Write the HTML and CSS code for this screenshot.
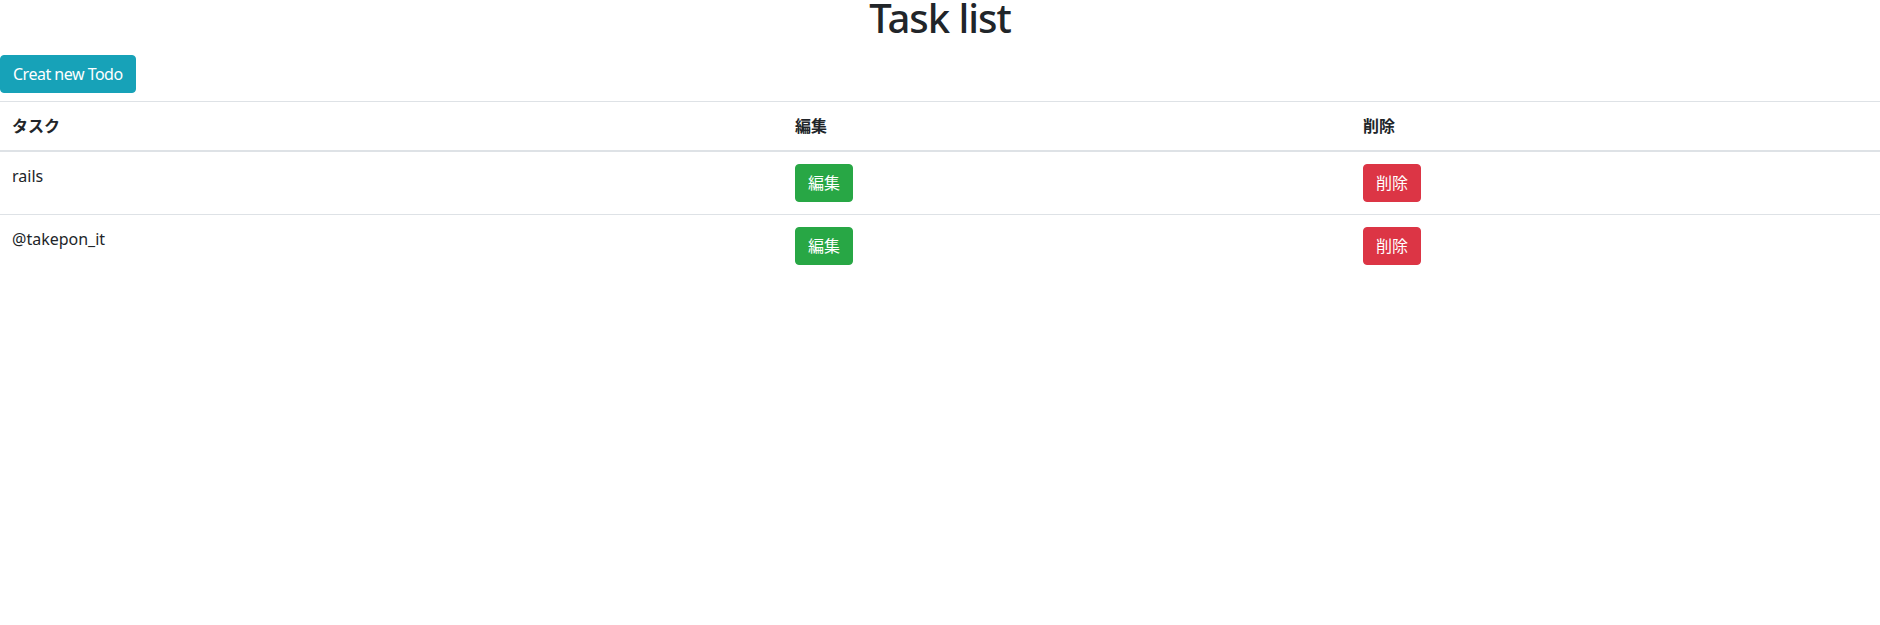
FILE: index.html
```html
<!DOCTYPE html>
<html lang="ja">
<head>
<meta charset="utf-8">
<title>Task list</title>
<link rel="stylesheet" href="styles.css">
</head>
<body>
<h1 class="title">Task list</h1>
<a class="btn btn-info btn-new" href="#">Creat new Todo</a>
<table class="table">
  <colgroup>
    <col class="col-task">
    <col class="col-edit">
    <col class="col-del">
  </colgroup>
  <thead>
    <tr><th>タスク</th><th>編集</th><th>削除</th></tr>
  </thead>
  <tbody>
    <tr>
      <td>rails</td>
      <td><a class="btn btn-success" href="#">編集</a></td>
      <td><a class="btn btn-danger" href="#">削除</a></td>
    </tr>
    <tr>
      <td>@takepon_it</td>
      <td><a class="btn btn-success" href="#">編集</a></td>
      <td><a class="btn btn-danger" href="#">削除</a></td>
    </tr>
  </tbody>
</table>
</body>
</html>
```
FILE: styles.css
```css
* { box-sizing: border-box; }
body {
  margin: 0;
  font-family: "Noto Sans", "Noto Sans CJK JP", sans-serif;
  font-size: 16px;
  line-height: 1.5;
  color: #212529;
  background: #fff;
}
.title {
  margin: 0 0 19px;
  font-size: 40px;
  font-weight: 500;
  line-height: 36px;
  letter-spacing: -1px;
  text-align: center;
}
.btn {
  display: inline-block;
  padding: 6px 12px;
  font-size: 16px;
  line-height: 24px;
  border-radius: 4px;
  color: #fff;
  text-decoration: none;
  border: 1px solid transparent;
  vertical-align: middle;
}
.btn-new { letter-spacing: -0.5px; }
.btn-info { background: #17a2b8; border-color: #17a2b8; }
.btn-success { background: #28a745; border-color: #28a745; }
.btn-danger { background: #dc3545; border-color: #dc3545; }
.table {
  width: 100%;
  margin-top: 8px;
  border-collapse: collapse;
  table-layout: fixed;
}
.col-task { width: 783px; }
.col-edit { width: 568px; }
.col-del { width: 529px; }
.table th, .table td {
  padding: 12px;
  text-align: left;
  vertical-align: top;
  border-top: 1px solid #dee2e6;
}
.table th { font-weight: 700; }
.table thead th { border-bottom: 2px solid #dee2e6; vertical-align: bottom; }
```
